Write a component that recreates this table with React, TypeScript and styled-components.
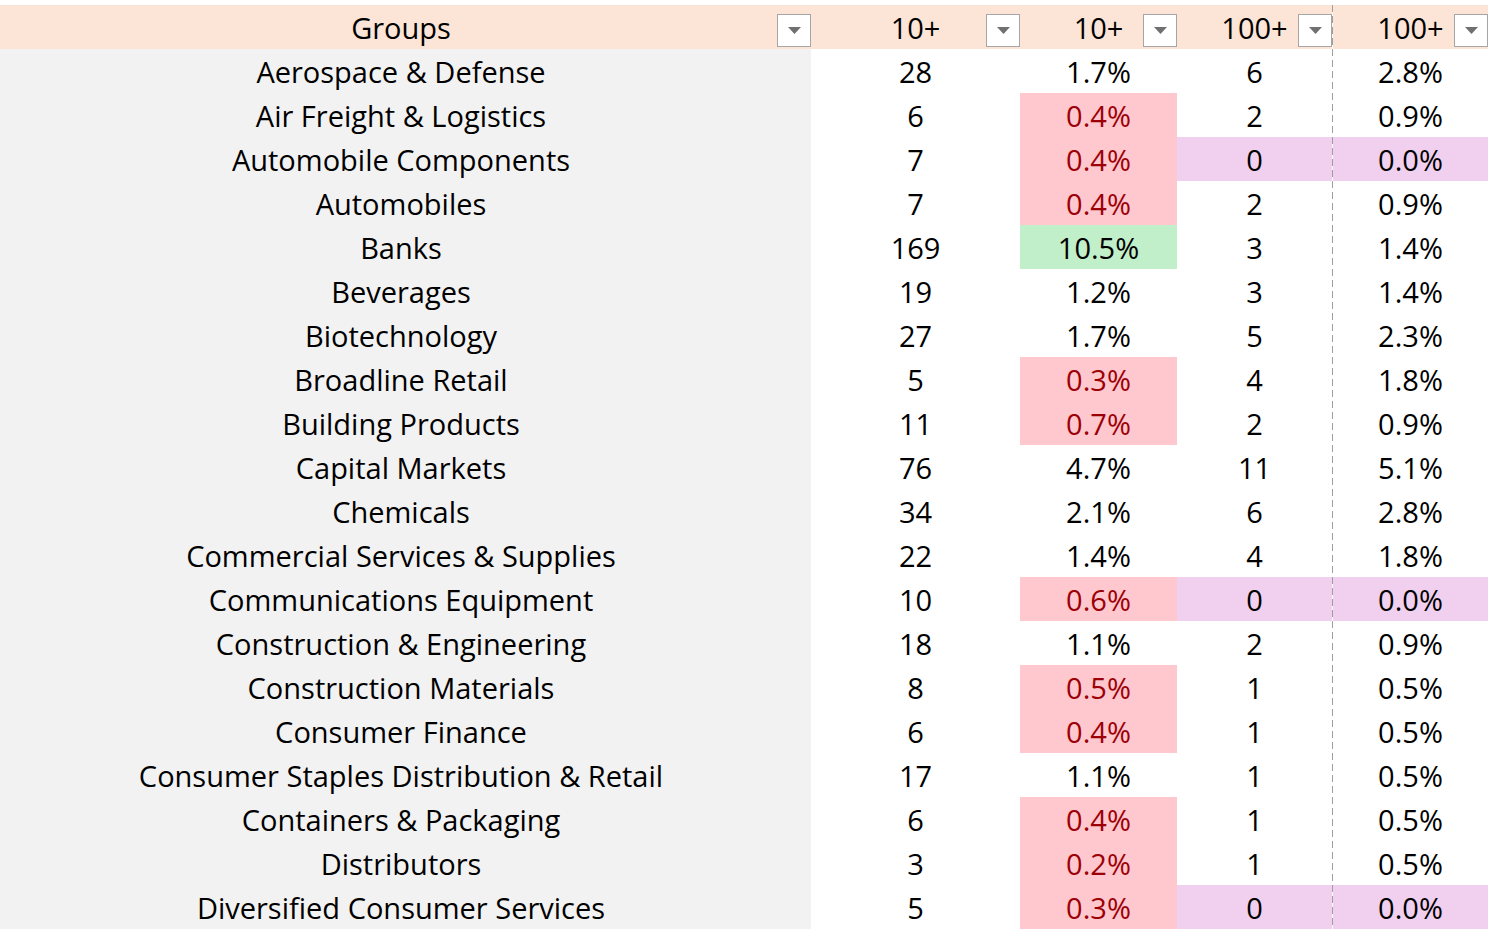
import styled, { createGlobalStyle } from 'styled-components';

const GlobalStyle = createGlobalStyle`
    body {
        margin: 0;
        background: #FFF;
        font-family: 'Open Sans', Roboto, 'Liberation Sans', sans-serif;
    }
`

type Tone = 'plain' | 'low' | 'high' | 'zero' | 'head';

const tones: Record<Tone, { bg: string; fg: string }> = {
    plain: { bg: 'transparent', fg: '#000' },
    low: { bg: '#FFC7CE', fg: '#9C0006' },
    high: { bg: '#C1EFCA', fg: '#000' },
    zero: { bg: '#F0D0EE', fg: '#000' },
    head: { bg: '#FCE4D6', fg: '#000' },
}

// dashed page-break line drawn down the left edge of the last column
const dash = 'repeating-linear-gradient(to bottom, #9E9E9E 0 7px, transparent 7px 11px)'

function cellBackground(tone: Tone, split?: boolean) {
    const fill = `linear-gradient(${tones[tone].bg}, ${tones[tone].bg})`
    if (!split) return `${fill}`
    return `${dash} 0 0 / 1px 100% no-repeat border-box, ${fill} padding-box`
}

const Sheet = styled.div`
    padding-top: 5px;
    width: 1488px;
    height: 925px;
    overflow: hidden;
`

const Grid = styled.div`
    display: grid;
    grid-template-columns: 811px 209px 157px 155px 156px;
    grid-auto-rows: 44px;
    font-size: 29px;
`

const HeadCell = styled.div<{ $split?: boolean }>`
    position: relative;
    display: flex;
    align-items: center;
    justify-content: center;
    padding-top: 1px;
    background: ${p => cellBackground('head', p.$split)};
    color: #000;
    border-left: ${p => p.$split ? '1px solid transparent' : 'none'};
`

const HeadLabel = styled.span<{ $shift?: number }>`
    margin-right: ${p => p.$shift ?? 0}px;
`

const FilterButton = styled.div`
    position: absolute;
    right: 0;
    bottom: 2px;
    width: 32px;
    height: 31px;
    background: #FFF;
    border: 1px solid #A6A6A6;
    display: flex;
    align-items: center;
    justify-content: center;
`

const GroupCell = styled.div`
    display: flex;
    align-items: center;
    justify-content: center;
    padding: 1px 9px 0 0;
    background: #F2F2F2;
    color: #000;
    white-space: nowrap;
`

const ValueCell = styled.div<{ $tone: Tone; $split?: boolean }>`
    display: flex;
    align-items: center;
    justify-content: center;
    padding-top: 1px;
    background: ${p => cellBackground(p.$tone, p.$split)};
    color: ${p => tones[p.$tone].fg};
    border-left: ${p => p.$split ? '1px solid transparent' : 'none'};
`

type Row = [string, number, number, number, number];

const rows: Row[] = [
    ['Aerospace & Defense', 28, 1.7, 6, 2.8],
    ['Air Freight & Logistics', 6, 0.4, 2, 0.9],
    ['Automobile Components', 7, 0.4, 0, 0.0],
    ['Automobiles', 7, 0.4, 2, 0.9],
    ['Banks', 169, 10.5, 3, 1.4],
    ['Beverages', 19, 1.2, 3, 1.4],
    ['Biotechnology', 27, 1.7, 5, 2.3],
    ['Broadline Retail', 5, 0.3, 4, 1.8],
    ['Building Products', 11, 0.7, 2, 0.9],
    ['Capital Markets', 76, 4.7, 11, 5.1],
    ['Chemicals', 34, 2.1, 6, 2.8],
    ['Commercial Services & Supplies', 22, 1.4, 4, 1.8],
    ['Communications Equipment', 10, 0.6, 0, 0.0],
    ['Construction & Engineering', 18, 1.1, 2, 0.9],
    ['Construction Materials', 8, 0.5, 1, 0.5],
    ['Consumer Finance', 6, 0.4, 1, 0.5],
    ['Consumer Staples Distribution & Retail', 17, 1.1, 1, 0.5],
    ['Containers & Packaging', 6, 0.4, 1, 0.5],
    ['Distributors', 3, 0.2, 1, 0.5],
    ['Diversified Consumer Services', 5, 0.3, 0, 0.0],
]

function shareTone(v: number): Tone {
    if (v >= 10) return 'high'
    if (v < 0.8) return 'low'
    return 'plain'
}

function Arrow() {
    return (
        <svg width="13" height="7" viewBox="0 0 13 7">
            <path d="M0 0 H13 L6.5 7 Z" fill="#707070" />
        </svg>
    )
}

const headers = [
    { label: 'Groups', shift: 9 },
    { label: '10+' },
    { label: '10+' },
    { label: '100+' },
    { label: '100+', split: true },
]

export default function App(){
    return(
        <Sheet>
            <GlobalStyle />
            <Grid>
                {headers.map((h, i) => (
                    <HeadCell key={i} $split={h.split}>
                        <HeadLabel $shift={h.shift}>{h.label}</HeadLabel>
                        <FilterButton><Arrow /></FilterButton>
                    </HeadCell>
                ))}
                {rows.map(([name, c10, p10, c100, p100]) => {
                    const zero = c100 === 0
                    return [
                        <GroupCell key={name + 'g'}>{name}</GroupCell>,
                        <ValueCell key={name + 'a'} $tone="plain">{c10}</ValueCell>,
                        <ValueCell key={name + 'b'} $tone={shareTone(p10)}>{p10.toFixed(1)}%</ValueCell>,
                        <ValueCell key={name + 'c'} $tone={zero ? 'zero' : 'plain'}>{c100}</ValueCell>,
                        <ValueCell key={name + 'd'} $tone={zero ? 'zero' : 'plain'} $split>{p100.toFixed(1)}%</ValueCell>,
                    ]
                })}
            </Grid>
        </Sheet>
    )
}
